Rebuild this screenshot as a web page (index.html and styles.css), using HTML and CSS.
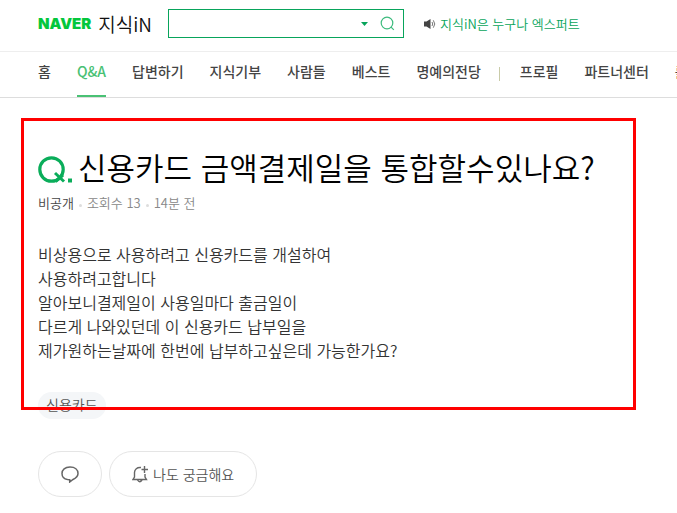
FILE: index.html
```html
<!DOCTYPE html>
<html lang="ko">
<head>
<meta charset="utf-8">
<meta name="viewport" content="width=device-width, initial-scale=1">
<title>신용카드 금액결제일을 통합할수있나요? : 지식iN</title>
<link rel="stylesheet" href="styles.css">
</head>
<body>
<header class="top">
  <a class="logo" href="#"><span class="logo-naver">NAVER</span><span class="logo-kin">지식iN</span></a>
  <form class="search" role="search">
    <input class="search-input" type="text" aria-label="검색어">
    <button class="search-toggle" type="button" aria-label="자동완성 펼치기">
      <svg width="7" height="4" viewBox="0 0 7 4"><path d="M0 0h7L3.5 4z" fill="#08a45b"/></svg>
    </button>
    <button class="search-submit" type="submit" aria-label="검색">
      <svg width="15" height="15" viewBox="0 0 15 15" fill="none" stroke="#3dbb7e" stroke-width="1.2"><circle cx="7" cy="7" r="5.8"/><path d="M10.8 10.8l3 3"/></svg>
    </button>
  </form>
  <a class="notice" href="#">
    <svg width="12" height="12" viewBox="0 0 12 12"><path d="M0 3.500h2.500L6.500 1v10L2.500 8.500H0z" fill="#444"/><path d="M8 4q1.500 2 0 4M9.300 2.300q3 3.700 0 7.400" fill="none" stroke="#777"/></svg>
    <span>지식iN은 누구나 엑스퍼트</span>
  </a>
</header>
<nav class="menu" aria-label="주 메뉴">
  <a href="#">홈</a>
  <a class="current" href="#" aria-current="page">Q&amp;A</a>
  <a href="#">답변하기</a>
  <a href="#">지식기부</a>
  <a href="#">사람들</a>
  <a href="#">베스트</a>
  <a href="#">명예의전당</a>
  <a class="divided" href="#">프로필</a>
  <a href="#">파트너센터</a>
  <a href="#">를</a>
</nav>
<main>
  <article class="question">
    <div class="highlight" aria-hidden="true"></div>
    <div class="heading">
      <svg class="mark" width="34" height="28" viewBox="0 0 34 28" role="img" aria-label="질문"><circle cx="13.500" cy="13.500" r="11.700" fill="none" stroke="#0aad5a" stroke-width="3.200"/><path d="M17 17l9 8.500M17.500 25.500l7.500-6.500" stroke="#0aad5a" stroke-width="3"/><path d="M30 22.500h4v4h-4z" fill="#0aad5a"/></svg>
      <h1>신용카드 금액결제일을 통합할수있나요?</h1>
    </div>
    <div class="meta"><span class="author">비공개</span><span>조회수 13</span><span>14분 전</span></div>
    <p class="body">비상용으로 사용하려고 신용카드를 개설하여<br>사용하려고합니다<br>알아보니결제일이 사용일마다 출금일이<br>다르게 나와있던데 이 신용카드 납부일을<br>제가원하는날짜에 한번에 납부하고싶은데 가능한가요?</p>
    <a class="tag" href="#">신용카드</a>
  </article>
  <div class="actions">
    <button class="pill" type="button" aria-label="댓글">
      <svg width="18" height="17" viewBox="0 0 18 17" fill="none" stroke="#666" stroke-width="1.500"><path d="M6.500 13.500C3 13 1 10.500 1 7.500 1 3.700 4 1 9 1s8 2.700 8 6.500c0 3.500-3 5-5 6L8.700 16v-2.300z"/></svg>
    </button>
    <button class="pill pill-wide" type="button">
      <svg width="17" height="17" viewBox="0 0 17 17" fill="none" stroke="#666" stroke-width="1.400"><path d="M9 1.500C5 1 2.500 3.500 2.500 6.500V11L1 13.500h13.500L13 11V8M12.500 0v7M9.500 3.500H16M5.500 14q2.200 3.500 4.500 0"/></svg>
      <span>나도 궁금해요</span>
    </button>
  </div>
</main>
</body>
</html>
```
FILE: styles.css
```css
* { box-sizing: border-box; }
body {
  margin: 0;
  overflow-x: hidden;
  background: #fff;
  color: #333;
  font-family: "Noto Sans CJK KR", sans-serif;
  font-size: 14px;
}
a { color: inherit; text-decoration: none; }
button { border: 0; padding: 0; background: none; font: inherit; color: inherit; }
svg { display: block; flex: none; }

.top {
  display: flex;
  align-items: center;
  height: 52px;
  padding: 0 38px 4px;
  border-bottom: 1px solid #eee;
  white-space: nowrap;
}
.logo { display: flex; align-items: center; gap: 7px; width: 130px; flex: none; }
.logo-naver { color: #03c73c; font: 900 15px/20px Inter, sans-serif; }
.logo-kin { color: #111; font-size: 19px; font-weight: 350; line-height: 26px; }
.search {
  display: flex;
  align-items: center;
  flex: 0 1 236px;
  height: 29px;
  border: 1px solid #08a45b;
}
.search-input { flex: 1; min-width: 0; height: 100%; border: 0; padding: 0 8px; outline: 0; background: none; font: inherit; }
.search-submit { margin: 0 8px 0 12px; }
.notice { display: flex; align-items: center; gap: 4px; margin-left: 20px; color: #08a45b; font-size: 13px; font-weight: 350; line-height: 20px; }

.menu {
  display: flex;
  gap: 26px;
  height: 46px;
  padding-left: 38px;
  border-bottom: 1px solid #ddd;
  overflow: hidden;
  white-space: nowrap;
  color: #444;
  font-weight: 500;
  line-height: 38px;
}
.menu a { flex: none; }
.menu .current { color: #49c174; border-bottom: 2px solid #49c174; }
.menu .divided::before { content: ""; display: inline-block; width: 1px; height: 14px; margin-right: 20px; background: #c9cba8; vertical-align: -4px; }
.menu .divided { margin-left: -8px; }

.question { position: relative; padding: 48px 38px 0; }
.highlight { position: absolute; inset: 20px 41px 9px 21px; border: 3px solid #f00; pointer-events: none; }
.heading { display: flex; align-items: center; gap: 6px; }
.mark { margin-top: 6px; }
h1 { margin: 0; color: #000; font-size: 31px; font-weight: 350; line-height: 42px; }
.meta { display: flex; align-items: center; margin-top: 5px; color: #888; font-size: 13px; font-weight: 350; line-height: 20px; }
.meta .author { color: #444; }
.meta span + span::before { content: ""; display: inline-block; width: 3px; height: 3px; margin: 0 5px; background: #ddd; border-radius: 50%; vertical-align: 1px; }
.body { margin: 29px 0 0; font-size: 16px; font-weight: 350; line-height: 24px; }
.tag { display: inline-block; margin-top: 30px; padding: 0 8px 2px; border-radius: 14px; background: #f4f6f8; color: #555; font-weight: 350; line-height: 25px; }

.actions { display: flex; gap: 7px; padding: 32px 38px 16px; }
.pill { display: flex; align-items: center; justify-content: center; gap: 4px; height: 46px; padding: 0 22px; border: 1px solid #e5e5e5; border-radius: 23px; color: #555; }
.pill-wide { font-weight: 350; }
```
